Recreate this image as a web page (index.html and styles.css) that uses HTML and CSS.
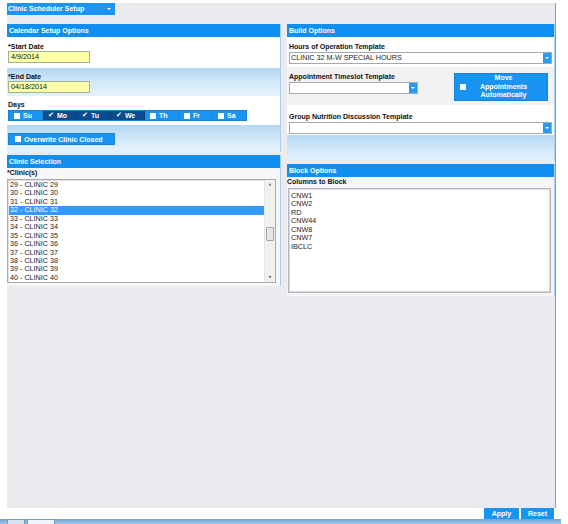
FILE: index.html
```html
<!DOCTYPE html>
<html>
<head>
<meta charset="utf-8">
<link rel="stylesheet" href="styles.css">
</head>
<body>
<div class="app">
  <div class="canvas">
    <div class="topbar">
      <div class="menu"><span>Clinic Scheduler Setup</span><span class="caret"></span></div>
    </div>
    <div class="columns">
      <div class="col left">
        <section class="panel cal">
          <div class="phead">Calendar Setup Options</div>
          <div class="sec white s-start">
            <div class="lbl">*Start Date</div>
            <div class="datebox">4/9/2014</div>
          </div>
          <div class="sec grad s-end">
            <div class="lbl">*End Date</div>
            <div class="datebox">04/18/2014</div>
          </div>
          <div class="sec white s-days">
            <div class="lbl">Days</div>
            <div class="days">
              <div class="day"><span class="box"></span>Su</div>
              <div class="day on"><span class="chk">✔</span>Mo</div>
              <div class="day on"><span class="chk">✔</span>Tu</div>
              <div class="day on"><span class="chk">✔</span>We</div>
              <div class="day"><span class="box"></span>Th</div>
              <div class="day"><span class="box"></span>Fr</div>
              <div class="day"><span class="box"></span>Sa</div>
            </div>
          </div>
          <div class="sec grad s-over">
            <div class="btn over"><span class="box"></span>Overwrite Clinic Closed</div>
          </div>
        </section>
        <section class="panel clinic">
          <div class="phead">Clinic Selection</div>
          <div class="lbl lbl-list">*Clinic(s)</div>
          <div class="listbox lb-clinic">
            <div class="items">
              <div class="item">29 - CLINIC 29</div>
              <div class="item">30 - CLINIC 30</div>
              <div class="item">31 - CLINIC 31</div>
              <div class="item sel">32 - CLINIC 32</div>
              <div class="item">33 - CLINIC 33</div>
              <div class="item">34 - CLINIC 34</div>
              <div class="item">35 - CLINIC 35</div>
              <div class="item">36 - CLINIC 36</div>
              <div class="item">37 - CLINIC 37</div>
              <div class="item">38 - CLINIC 38</div>
              <div class="item">39 - CLINIC 39</div>
              <div class="item">40 - CLINIC 40</div>
            </div>
            <div class="sbar">
              <div class="sarrow">▲</div>
              <div class="strack"><div class="sthumb"></div></div>
              <div class="sarrow">▼</div>
            </div>
          </div>
        </section>
      </div>
      <div class="col right">
        <section class="panel build">
          <div class="phead">Build Options</div>
          <div class="sec white s-hours">
            <div class="lbl">Hours of Operation Template</div>
            <div class="select wide"><span class="val">CLINIC 32 M-W SPECIAL HOURS</span><span class="arr"></span></div>
          </div>
          <div class="sec light s-slot">
            <div class="slot-left">
              <div class="lbl">Appointment Timeslot Template</div>
              <div class="select narrow"><span class="val"></span><span class="arr"></span></div>
            </div>
            <div class="btn move"><span class="box"></span><span class="movetxt">Move<br>Appointments<br>Automatically</span></div>
          </div>
          <div class="sec white s-group">
            <div class="lbl">Group Nutrition Discussion Template</div>
            <div class="select wide"><span class="val"></span><span class="arr"></span></div>
          </div>
          <div class="sec grad s-blank"></div>
        </section>
        <section class="panel block">
          <div class="phead">Block Options</div>
          <div class="lbl lbl-list">Columns to Block</div>
          <div class="listbox lb-block">
            <div class="items">
              <div class="item">CNW1</div>
              <div class="item">CNW2</div>
              <div class="item">RD</div>
              <div class="item">CNW44</div>
              <div class="item">CNW8</div>
              <div class="item">CNW7</div>
              <div class="item">IBCLC</div>
            </div>
          </div>
        </section>
      </div>
    </div>
  </div>
  <div class="footer">
    <div class="fbtn apply">Apply</div>
    <div class="fbtn reset">Reset</div>
  </div>
  <div class="taskbar">
    <span class="tab t1"></span>
    <span class="tab t2"></span>
  </div>
</div>
</body>
</html>
```

FILE: styles.css
```css
* { box-sizing: border-box; }
html, body { margin: 0; padding: 0; background: #ffffff; }
body {
  font-family: "Liberation Sans", Arial, sans-serif;
  font-size: 7px;
  color: #1a1a1a;
}
.app {
  width: 556px;
  padding: 3px 0 0 7px;
}
.canvas {
  height: 505px;
  background: #ebebef;
  border-right: 1px solid #9a9aa2;
}
.topbar { height: 12px; }
.menu {
  width: 108px;
  height: 12px;
  background: #1e94f2;
  color: #fff;
  font-weight: bold;
  font-size: 7px;
  line-height: 12px;
  padding-left: 1px;
  display: flex;
  justify-content: space-between;
  align-items: center;
}
.caret {
  width: 0; height: 0;
  margin-right: 4px;
  border-left: 2px solid transparent;
  border-right: 2px solid transparent;
  border-top: 2px solid #fff;
}
.columns {
  display: flex;
  gap: 6px;
  margin-top: 9px;
}
.col { display: flex; flex-direction: column; }
.col.left { width: 274px; gap: 3px; }
.col.right { width: 268px; gap: 2px; }

.panel {
  border-right: 1px solid #a9cfee;
  display: flex;
  flex-direction: column;
}
.phead {
  height: 13px;
  background: #0f8fef;
  color: #fff;
  font-weight: bold;
  font-size: 7px;
  line-height: 13px;
  padding-left: 2px;
}
.lbl {
  font-weight: bold;
  font-size: 7px;
  line-height: 8px;
  color: #111;
  white-space: nowrap;
}
.sec { padding-left: 1px; }
.white { background: #ffffff; }
.grad { background: linear-gradient(#b3d7f3, #d7ebfa 60%, #e4f2fc); }
.light { background: #f2f2f5; }

.datebox {
  width: 82px;
  height: 12px;
  background: #ffffa6;
  border: 1px solid #9fb19c;
  font-size: 7.2px;
  line-height: 10px;
  padding-left: 2px;
  color: #111;
}
.s-start { height: 31px; padding-top: 6px; }
.s-end { height: 28px; padding-top: 5px; }
.s-days { height: 29px; padding-top: 5px; }
.s-over { height: 27px; padding-top: 8px; }

.days {
  display: flex;
  width: 239px;
  height: 11px;
  margin-top: 1px;
  background: #1a94f2;
  border: 1px solid #1384dc;
}
.day {
  flex: 1;
  display: flex;
  align-items: center;
  padding-left: 5px;
  gap: 3px;
  color: #fff;
  font-weight: bold;
  font-size: 7px;
  border-right: 1px solid #1686e0;
}
.day:last-child { border-right: none; }
.day.on { background: #0b4c90; border-right-color: #0a3f78; }
.box {
  display: inline-block;
  width: 6px;
  height: 6px;
  background: #fff;
  flex: none;
}
.chk {
  font-family: "DejaVu Sans", sans-serif;
  font-size: 7px;
  line-height: 7px;
  color: #fff;
}
.btn {
  background: #1a94f2;
  border: 1px solid #1384dc;
  color: #fff;
  font-weight: bold;
  font-size: 7px;
}
.btn.over {
  width: 107px;
  height: 12px;
  display: flex;
  align-items: center;
  gap: 3px;
  padding-left: 6px;
}

.clinic { height: 131px; background: #f6f7f9; }
.lbl-list { line-height: 10px; height: 10px; }
.listbox {
  background: #fff;
  border: 1px solid #a9a9ae;
  box-shadow: inset 1px 1px 0 #e0e0e0;
  display: flex;
  margin-top: 1px;
}
.lb-clinic { width: 269px; height: 104px; }
.lb-block { width: 263px; height: 105px; margin-left: 1px; border: 1px solid #b5b5ba; box-shadow: inset 0 0 0 1px #dcdce0; }
.items {
  flex: 1;
  padding-top: 1px;
  padding-left: 1px;
  overflow: hidden;
}
.lb-block .items { padding-top: 3px; }
.item {
  font-size: 7.2px;
  line-height: 8.45px;
  height: 8.45px;
  color: #222;
  padding-left: 1px;
  white-space: nowrap;
}
.item.sel { background: #3399ff; color: #fff; }
.sbar {
  width: 11px;
  display: flex;
  flex-direction: column;
  background: #f0f0f0;
  border-left: 1px solid #e4e4e4;
}
.sarrow {
  height: 9px;
  font-family: "DejaVu Sans", sans-serif;
  font-size: 3px;
  line-height: 9px;
  text-align: center;
  color: #555;
}
.strack { flex: 1; position: relative; }
.sthumb {
  position: absolute;
  left: 1px;
  right: 1px;
  top: 38px;
  height: 14px;
  background: #e6e6e8;
  border: 1px solid #a5a5a8;
  border-radius: 1px;
}

.build { height: 138px; }
.s-hours { height: 30px; padding-top: 6px; padding-left: 2px; }
.select {
  height: 12px;
  background: #fff;
  border: 1px solid #a5a8b0;
  display: flex;
  margin-top: 1px;
}
.select.wide { width: 263px; }
.select.narrow { width: 129px; }
.select .val {
  flex: 1;
  font-size: 7.2px;
  line-height: 10px;
  padding-left: 1px;
  color: #222;
  white-space: nowrap;
}
.select .arr {
  width: 8px;
  background: #2b9af2;
  position: relative;
}
.select .arr::after {
  content: "";
  position: absolute;
  left: 2px;
  top: 4px;
  width: 0; height: 0;
  border-left: 2px solid transparent;
  border-right: 2px solid transparent;
  border-top: 2px solid #fff;
}
.s-slot {
  height: 38px;
  padding: 6px 0 0 2px;
  display: flex;
  justify-content: space-between;
}
.btn.move {
  width: 94px;
  height: 28px;
  margin-right: 6px;
  display: flex;
  align-items: center;
  padding-left: 5px;
}
.movetxt {
  flex: 1;
  text-align: center;
  line-height: 8.6px;
  padding-right: 6px;
}
.s-group { height: 30px; padding-top: 8px; padding-left: 2px; }
.s-blank { height: 27px; }
.block { height: 132px; background: #f4f5f8; }

.footer {
  width: 549px;
  height: 11px;
  display: flex;
  justify-content: flex-end;
  gap: 2px;
  padding-right: 2px;
}
.fbtn {
  height: 11px;
  background: #1a94f2;
  color: #fff;
  font-weight: bold;
  font-size: 7px;
  line-height: 11px;
  text-align: center;
}
.apply { width: 35px; }
.reset { width: 33px; }
.taskbar {
  width: 561px;
  margin-left: -7px;
  height: 5px;
  background: linear-gradient(#6fa5d4, #9cc3e6);
  display: flex;
  gap: 2px;
  padding-left: 7px;
}
.tab {
  height: 5px;
  background: #d3e3f1;
  border: 1px solid #7d9bb8;
  border-bottom: none;
}
.t1 { width: 18px; }
.t2 { width: 28px; background: #eef4fa; }
```
